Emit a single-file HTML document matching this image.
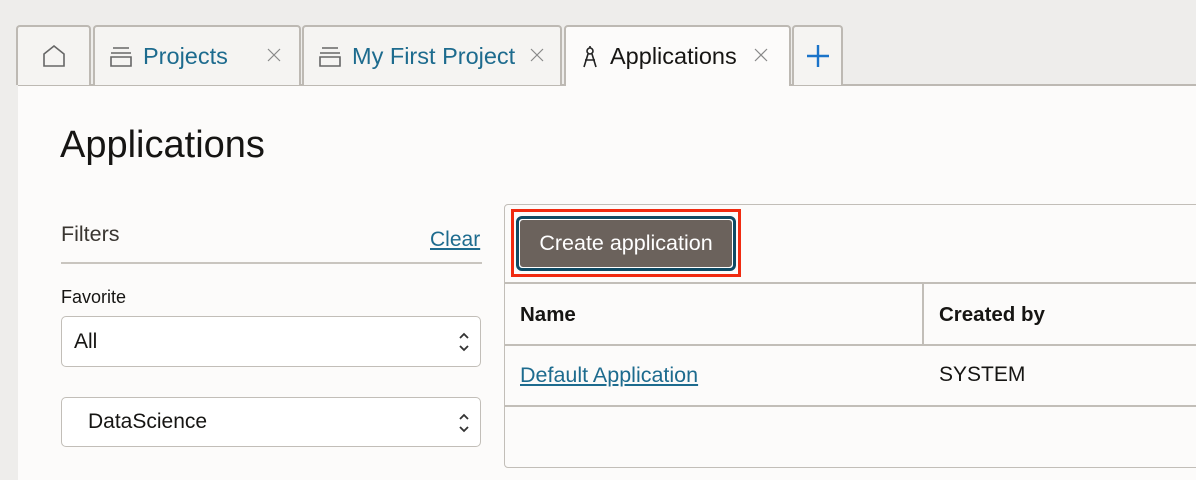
<!DOCTYPE html>
<html><head><style>
*{box-sizing:border-box;margin:0;padding:0}
body{width:1196px;height:480px;overflow:hidden;background:#eeedeb;font-family:"Liberation Sans",sans-serif;position:relative}
.a{position:absolute}
.tab{position:absolute;top:25px;height:60px;background:#f5f4f2;border:2px solid #bdb9b3;border-bottom:none;border-radius:4px 4px 0 0;font-size:23.5px;color:#1d6b8e;display:flex;align-items:center}
.x{position:absolute;top:21px;width:14px;height:14px}
.panel{position:absolute;left:18px;top:84px;width:1178px;height:396px;background:#fcfbfa;border-top:2px solid #bdb9b3}
.sel{position:absolute;left:61px;width:420px;background:#fff;border:1px solid #c2beb8;border-radius:5px;font-size:21px;color:#161513;display:flex;align-items:center}
.arr{position:absolute;right:10px;top:13px;width:12px;height:24px}
</style></head><body>
<div class="panel"></div>
<div class="tab" style="left:16px;width:75px;justify-content:center">
<svg width="24" height="22" viewBox="0 0 24 22"><path d="M2 21V9L12 1l10 8v12z" fill="none" stroke="#666" stroke-width="1.6"/></svg></div>
<div class="tab" style="left:93px;width:208px;padding-left:14px">
<svg width="24" height="22" viewBox="0 0 24 22"><path d="M4 3h16M2 8h20M2 12h20v9H2z" fill="none" stroke="#666" stroke-width="1.6"/></svg>
<span style="margin-left:10px">Projects</span><svg class="x" style="left:172px" viewBox="0 0 14 14"><path d="M1 1l12 12M13 1L1 13" stroke="#888" stroke-width="1.2"/></svg></div>
<div class="tab" style="left:302px;width:260px;padding-left:14px">
<svg width="24" height="22" viewBox="0 0 24 22"><path d="M4 3h16M2 8h20M2 12h20v9H2z" fill="none" stroke="#666" stroke-width="1.6"/></svg>
<span style="margin-left:10px">My First Project</span><svg class="x" style="left:226px" viewBox="0 0 14 14"><path d="M1 1l12 12M13 1L1 13" stroke="#888" stroke-width="1.2"/></svg></div>
<div class="tab" style="left:564px;width:227px;height:61px;background:#fcfbfa;color:#161513;padding-left:16px">
<svg width="16" height="24" viewBox="0 0 16 24"><circle cx="8" cy="6" r="3" fill="none" stroke="#222" stroke-width="1.6"/><path d="M8 1v2M6 9L2 22M10 9l4 13M3 15h10" fill="none" stroke="#222" stroke-width="1.6"/></svg>
<span style="margin-left:12px">Applications</span><svg class="x" style="left:188px" viewBox="0 0 14 14"><path d="M1 1l12 12M13 1L1 13" stroke="#888" stroke-width="1.2"/></svg></div>
<div class="tab" style="left:792px;width:51px;justify-content:center">
<svg width="24" height="24" viewBox="0 0 24 24"><path d="M12 1v22M1 12h22" stroke="#1a73c9" stroke-width="2.4"/></svg></div>
<div class="a" style="left:60px;top:124px;font-size:38px;color:#161513">Applications</div>
<div class="a" style="left:61px;top:222px;font-size:21.5px;color:#3a3631">Filters</div>
<div class="a" style="left:430px;top:228px;font-size:21px;color:#1d6b8e;text-decoration:underline">Clear</div>
<div class="a" style="left:61px;top:262px;width:421px;height:2px;background:#c9c5bf"></div>
<div class="a" style="left:61px;top:287px;font-size:18px;color:#161513">Favorite</div>
<div class="sel" style="top:316px;height:51px;padding-left:12px">All<svg class="arr" viewBox="0 0 12 24"><path d="M2 8l4-4 4 4M2 16l4 4 4-4" fill="none" stroke="#333" stroke-width="1.8"/></svg></div>
<div class="sel" style="top:397px;height:50px;padding-left:26px">DataScience<svg class="arr" viewBox="0 0 12 24"><path d="M2 8l4-4 4 4M2 16l4 4 4-4" fill="none" stroke="#333" stroke-width="1.8"/></svg></div>
<div class="a" style="left:504px;top:204px;width:700px;height:264px;border:1.5px solid #c2beb8;border-radius:4px;background:#fcfbfa"></div>
<div class="a" style="left:511px;top:209px;width:230px;height:68px;border:3px solid #f02a10"></div>
<div class="a" style="left:516px;top:216px;width:220px;height:55px;border:3px solid #0e4a64;border-radius:6px"></div>
<div class="a" style="left:519px;top:219px;width:214px;height:49px;background:#6b625c;border:1px solid #fff;border-radius:4px;color:#fff;font-size:21.5px;display:flex;align-items:center;justify-content:center">Create application</div>
<div class="a" style="left:505px;top:282px;width:700px;height:1.5px;background:#c2beb8"></div>
<div class="a" style="left:505px;top:344px;width:700px;height:1.5px;background:#c2beb8"></div>
<div class="a" style="left:505px;top:405px;width:700px;height:1.5px;background:#c2beb8"></div>
<div class="a" style="left:922px;top:283px;width:1.5px;height:61px;background:#c2beb8"></div>
<div class="a" style="left:520px;top:303px;font-size:20.5px;font-weight:bold;color:#161513">Name</div>
<div class="a" style="left:939px;top:303px;font-size:20.5px;font-weight:bold;color:#161513">Created by</div>
<div class="a" style="left:520px;top:363px;font-size:21.5px;color:#1d6b8e;text-decoration:underline">Default Application</div>
<div class="a" style="left:939px;top:363px;font-size:21px;color:#161513">SYSTEM</div>
</body></html>
